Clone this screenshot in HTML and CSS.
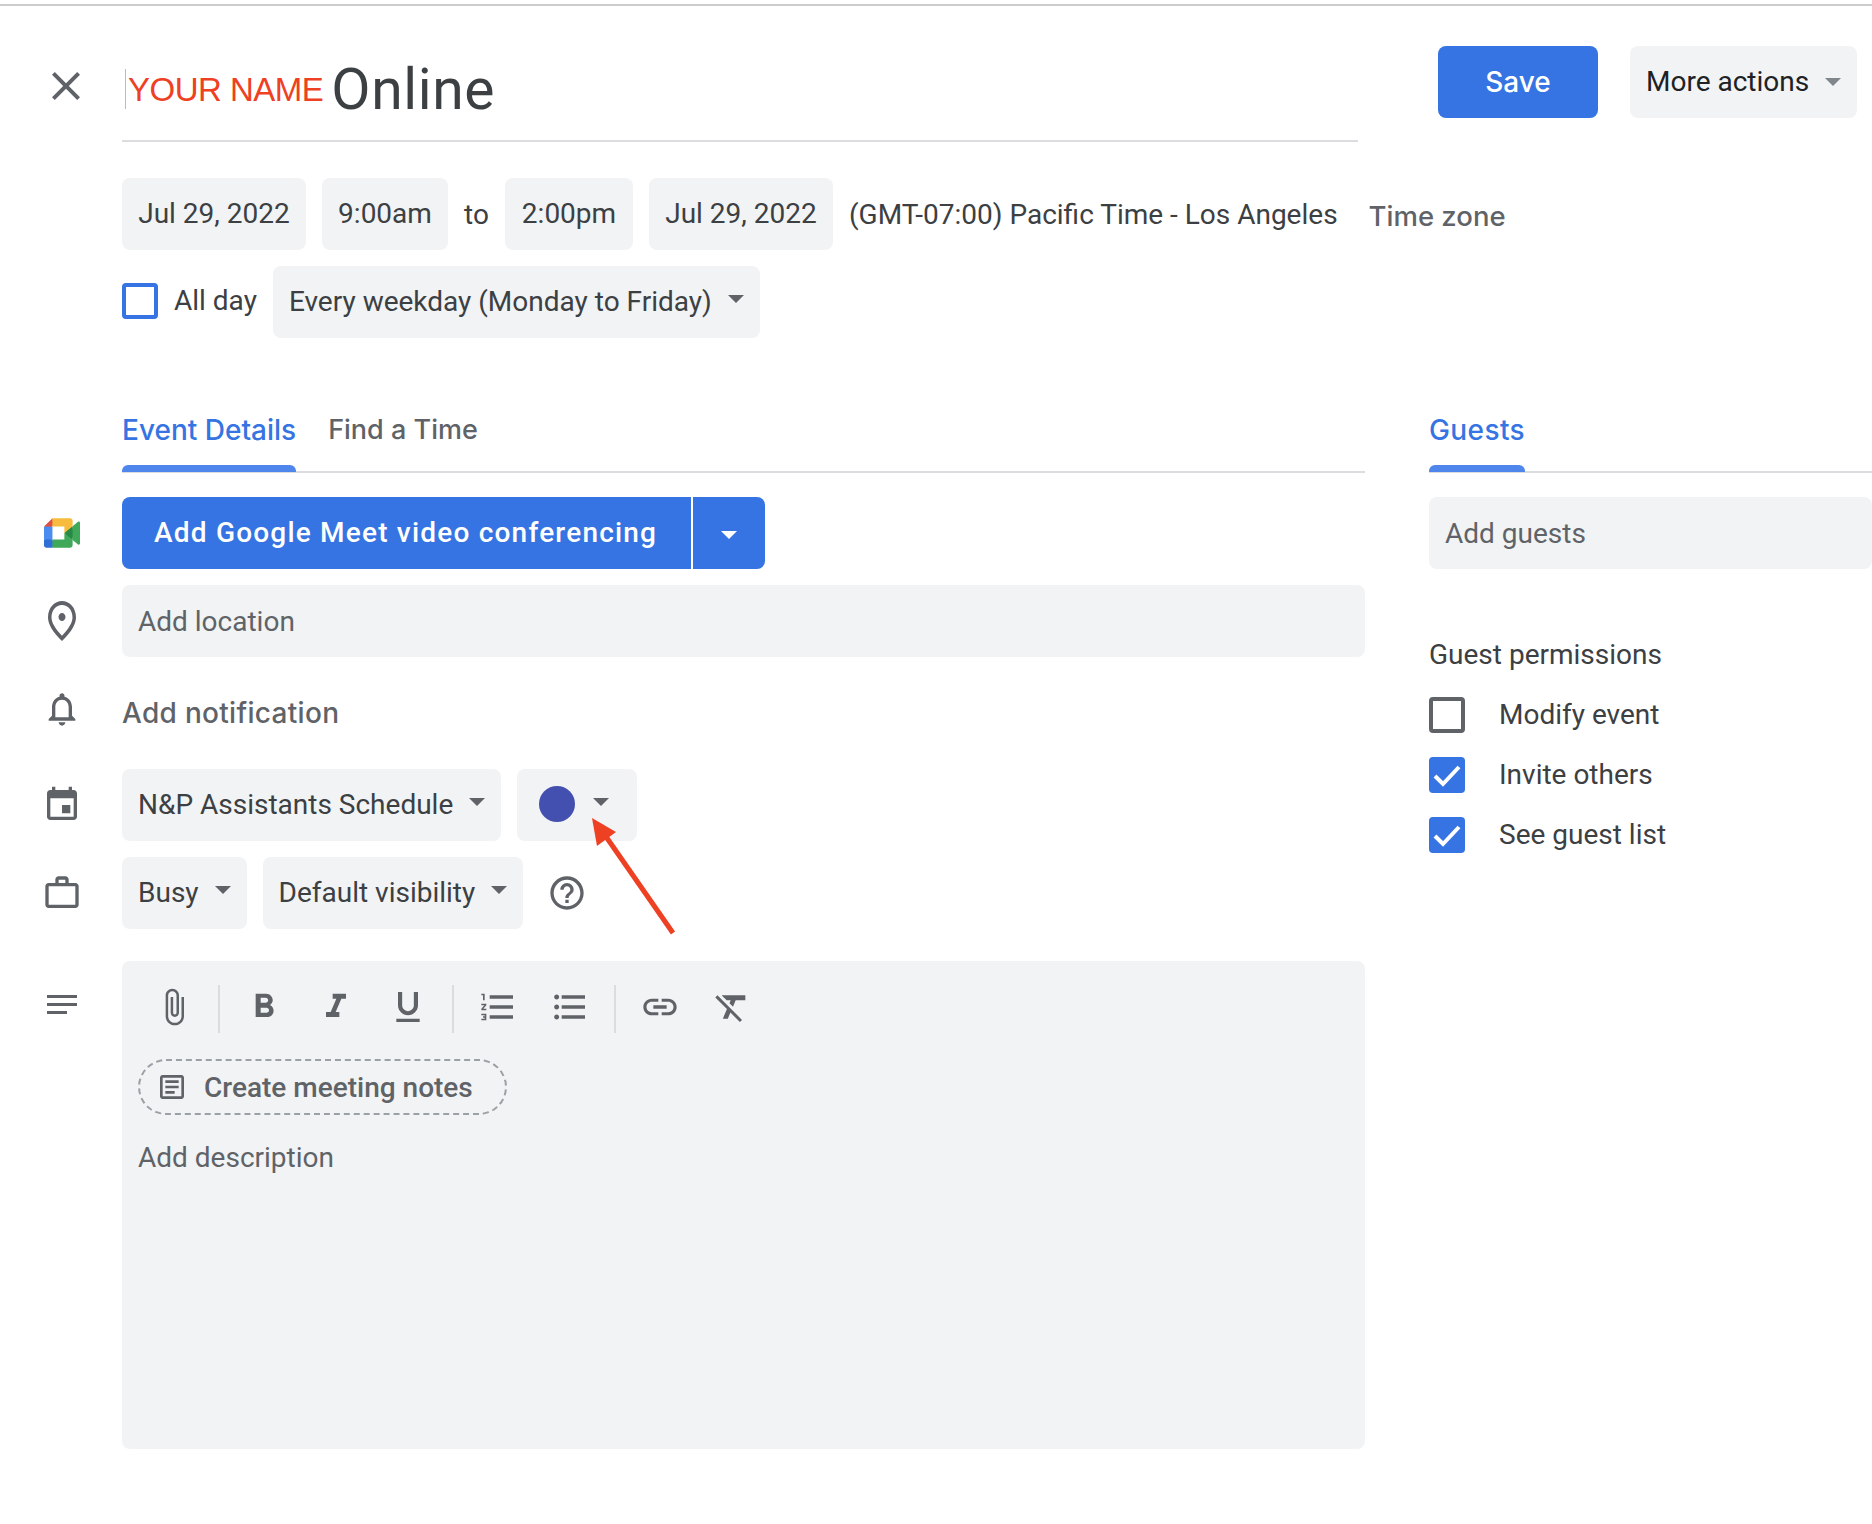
FILE: index.html
```html
<!DOCTYPE html>
<html lang="en">
<head>
  <meta charset="UTF-8" />
  <title>Edit event - Calendar</title>
  <link rel="stylesheet" href="styles.css">
</head>
<body>
  <div class="page">
    <div class="top-line"></div>

    <header class="head">
      <div class="icon-col">
        <svg class="ic ic-close" viewBox="0 0 24 24"><path d="M19 6.41L17.59 5 12 10.59 6.41 5 5 6.41 10.59 12 5 17.59 6.41 19 12 13.41 17.59 19 19 17.59 13.41 12z"/></svg>
      </div>
      <div class="title">
        <span class="cursor"></span>
        <span class="title-name">YOUR NAME</span>
        <span class="title-text">Online</span>
      </div>
      <button class="btn-save">Save</button>
      <div class="box box-more">More actions <span class="caret caret-light"></span></div>
    </header>

    <div class="date-row">
      <div class="box box-date">Jul 29, 2022</div>
      <div class="box box-start">9:00am</div>
      <span class="to">to</span>
      <div class="box box-end">2:00pm</div>
      <div class="box box-date">Jul 29, 2022</div>
      <span class="tz">(GMT-07:00) Pacific Time - Los Angeles</span>
      <span class="tz-link">Time zone</span>
    </div>

    <div class="repeat-row">
      <span class="check check-blue"></span>
      <span class="allday">All day</span>
      <div class="box">Every weekday (Monday to Friday) <span class="caret"></span></div>
    </div>

    <div class="columns">
      <section class="left">
        <nav class="tabs">
          <a class="tab tab-on">Event Details</a>
          <a class="tab tab-find">Find a Time</a>
        </nav>

        <div class="row row-first">
          <div class="icon-col">
            <svg class="meet" viewBox="0 0 87.5 72">
              <path fill="#2a8a45" d="M49.5 36l8.53 9.75 11.47 7.33 2-17.02-2-16.64-11.69 6.44z"/>
              <path fill="#2f6fd6" d="M0 51.5V66c0 3.315 2.685 6 6 6h14.5l3-10.96-3-9.54-9.95-3z"/>
              <path fill="#dd5144" d="M20.5 0L0 20.5l10.55 3 9.95-3 2.95-9.41z"/>
              <path fill="#4a8cf0" d="M20.5 20.5H0v31h20.5z"/>
              <path fill="#3fa959" d="M82.6 8.68L69.5 19.42v33.66l13.16 10.79c1.97 1.54 4.85.135 4.85-2.37V11c0-2.535-2.945-3.925-4.91-2.32zM49.5 36v15.5h-29V72h43c3.315 0 6-2.685 6-6V53.08z"/>
              <path fill="#f7bc3d" d="M63.5 0h-43v20.5h29V36l20-16.57V6c0-3.315-2.685-6-6-6z"/>
            </svg>
          </div>
          <div class="btn-meet">
            <span class="meet-label">Add Google Meet video conferencing</span>
            <span class="meet-more"><span class="caret caret-white"></span></span>
          </div>
        </div>

        <div class="row">
          <div class="icon-col">
            <svg class="ic ic-pin" viewBox="0 0 24 24" preserveAspectRatio="none"><path d="M12 12c-1.1 0-2-.9-2-2s.9-2 2-2 2 .9 2 2-.9 2-2 2zm6-1.8C18 6.57 15.35 4 12 4s-6 2.57-6 6.2c0 2.34 1.95 5.44 6 9.14 4.05-3.7 6-6.8 6-9.14zM12 2c4.2 0 8 3.22 8 8.2 0 3.32-2.67 7.25-8 11.8-5.33-4.55-8-8.48-8-11.8C4 5.22 7.8 2 12 2z"/></svg>
          </div>
          <div class="box box-wide placeholder">Add location</div>
        </div>

        <div class="row row-notify">
          <div class="icon-col">
            <svg class="ic ic-40 ic-bell" viewBox="0 0 24 24"><path d="M12 22c1.1 0 2-.9 2-2h-4c0 1.1.9 2 2 2zm6-6v-5c0-3.07-1.63-5.64-4.5-6.32V4c0-.83-.67-1.5-1.5-1.5s-1.5.67-1.5 1.5v.68C7.64 5.36 6 7.92 6 11v5l-2 2v1h16v-1l-2-2zm-2 1H8v-6c0-2.48 1.51-4.5 4-4.5s4 2.02 4 4.5v6z"/></svg>
          </div>
          <span class="notify">Add notification</span>
        </div>

        <div class="row">
          <div class="icon-col">
            <svg class="ic ic-40" viewBox="0 0 24 24"><path d="M17 12h-5v5h5v-5zM16 1v2H8V1H6v2H5c-1.11 0-1.99.9-1.99 2L3 19c0 1.1.89 2 2 2h14c1.1 0 2-.9 2-2V5c0-1.1-.9-2-2-2h-1V1h-2zm3 18H5V8h14v11z"/></svg>
          </div>
          <div class="box">N&amp;P Assistants Schedule <span class="caret"></span></div>
          <div class="box box-color"><span class="dot"></span><span class="caret"></span></div>
        </div>

        <div class="row">
          <div class="icon-col">
            <svg class="ic ic-40" viewBox="0 0 24 24"><path d="M14 6V4h-4v2h4zM4 8v11h16V8H4zm16-2c1.11 0 2 .89 2 2v11c0 1.11-.89 2-2 2H4c-1.11 0-2-.89-2-2l.01-11c0-1.11.88-2 1.99-2h4V4c0-1.11.89-2 2-2h4c1.11 0 2 .89 2 2v2h4z"/></svg>
          </div>
          <div class="box">Busy <span class="caret"></span></div>
          <div class="box">Default visibility <span class="caret"></span></div>
          <svg class="ic ic-40 ic-help" viewBox="0 0 24 24"><path d="M11 18h2v-2h-2v2zm1-16C6.48 2 2 6.48 2 12s4.48 10 10 10 10-4.48 10-10S17.52 2 12 2zm0 18c-4.41 0-8-3.59-8-8s3.59-8 8-8 8 3.59 8 8-3.59 8-8 8zm0-14c-2.21 0-4 1.79-4 4h2c0-1.1.9-2 2-2s2 .9 2 2c0 2-3 1.75-3 5h2c0-2.25 3-2.5 3-5 0-2.21-1.79-4-4-4z"/></svg>
        </div>

        <div class="row row-editor">
          <div class="icon-col icon-col-top">
            <svg class="ic ic-lines" viewBox="0 0 30 20"><rect y="0" width="30" height="3"/><rect y="8" width="30" height="3"/><rect y="16" width="20" height="3"/></svg>
          </div>
          <div class="editor">
            <div class="toolbar">
              <span class="tool"><svg class="ic ic-40" viewBox="0 0 24 24"><path d="M16.5 6v11.5c0 2.21-1.79 4-4 4s-4-1.79-4-4V5c0-1.38 1.12-2.5 2.5-2.5s2.5 1.12 2.5 2.5v10.5c0 .55-.45 1-1 1s-1-.45-1-1V6H10v9.5c0 1.38 1.12 2.5 2.5 2.5s2.5-1.12 2.5-2.5V5c0-2.21-1.79-4-4-4S7 2.79 7 5v12.5c0 3.04 2.46 5.5 5.5 5.5s5.5-2.46 5.5-5.5V6h-1.5z"/></svg></span>
              <span class="sep"></span>
              <span class="tool"><svg class="ic ic-40" viewBox="0 0 24 24"><path d="M15.6 10.79c.97-.67 1.65-1.77 1.65-2.79 0-2.26-1.75-4-4-4H7v14h7.04c2.09 0 3.71-1.7 3.71-3.79 0-1.52-.86-2.82-2.15-3.42zM10 6.5h3c.83 0 1.5.67 1.5 1.5s-.67 1.5-1.5 1.5h-3v-3zm3.5 9H10v-3h3.5c.83 0 1.5.67 1.5 1.5s-.67 1.5-1.5 1.5z"/></svg></span>
              <span class="tool"><svg class="ic ic-40" viewBox="0 0 24 24"><path d="M10 4v3h2.21l-3.42 8H6v3h8v-3h-2.21l3.42-8H18V4z"/></svg></span>
              <span class="tool"><svg class="ic ic-40" viewBox="0 0 24 24"><path d="M12 17c3.31 0 6-2.69 6-6V3h-2.5v8c0 1.93-1.57 3.5-3.5 3.5S8.5 12.93 8.5 11V3H6v8c0 3.31 2.69 6 6 6zm-7 2v2h14v-2H5z"/></svg></span>
              <span class="sep"></span>
              <span class="tool"><svg class="ic ic-40" viewBox="0 0 24 24"><path d="M2 17h2v.5H3v1h1v.5H2v1h3v-4H2v1zm1-9h1V4H2v1h1v3zm-1 3h1.8L2 13.1v.9h3v-1H3.2L5 10.9V10H2v1zm5-6v2h14V5H7zm0 14h14v-2H7v2zm0-6h14v-2H7v2z"/></svg></span>
              <span class="tool"><svg class="ic ic-40" viewBox="0 0 24 24"><path d="M4 10.5c-.83 0-1.5.67-1.5 1.5s.67 1.5 1.5 1.5 1.5-.67 1.5-1.5-.67-1.5-1.5-1.5zm0-6c-.83 0-1.5.67-1.5 1.5S3.17 7.5 4 7.5 5.5 6.83 5.5 6 4.83 4.5 4 4.5zm0 12c-.83 0-1.5.68-1.5 1.5s.68 1.5 1.5 1.5 1.5-.68 1.5-1.5-.67-1.5-1.5-1.5zM7 19h14v-2H7v2zm0-6h14v-2H7v2zm0-8v2h14V5H7z"/></svg></span>
              <span class="sep"></span>
              <span class="tool"><svg class="ic ic-40" viewBox="0 0 24 24"><path d="M3.9 12c0-1.71 1.39-3.1 3.1-3.1h4V7H7c-2.76 0-5 2.24-5 5s2.24 5 5 5h4v-1.9H7c-1.71 0-3.1-1.39-3.1-3.1zM8 13h8v-2H8v2zm9-6h-4v1.9h4c1.71 0 3.1 1.39 3.1 3.1s-1.39 3.1-3.1 3.1h-4V17h4c2.76 0 5-2.24 5-5s-2.24-5-5-5z"/></svg></span>
              <span class="tool"><svg class="ic ic-40" viewBox="0 0 24 24"><path d="M3.27 5L2 6.27l6.97 6.97L6.5 19h3l1.57-3.66L16.73 21 18 19.73 3.55 5.27 3.27 5zM6 5v.18L8.82 8h2.4l-.72 1.68 2.1 2.1L14.21 8H20V5H6z"/></svg></span>
            </div>
            <div class="chip">
              <svg class="ic ic-32" viewBox="0 0 24 24"><path d="M19 3H5c-1.1 0-2 .9-2 2v14c0 1.1.9 2 2 2h14c1.1 0 2-.9 2-2V5c0-1.1-.9-2-2-2zm0 16H5V5h14v14zM7 7h10v2H7zm0 4h10v2H7zm0 4h7v2H7z"/></svg>
              <span>Create meeting notes</span>
            </div>
            <div class="desc">Add description</div>
          </div>
        </div>
      </section>

      <aside class="right">
        <nav class="tabs tabs-right">
          <a class="tab tab-on tab-guests">Guests</a>
        </nav>
        <div class="box box-guests placeholder">Add guests</div>
        <div class="perm-title">Guest permissions</div>
        <div class="perm"><span class="check check-grey"></span>Modify event</div>
        <div class="perm"><span class="check check-on"><svg viewBox="0 0 36 36"><polyline points="6,19 14,27 30,10"/></svg></span>Invite others</div>
        <div class="perm"><span class="check check-on"><svg viewBox="0 0 36 36"><polyline points="6,19 14,27 30,10"/></svg></span>See guest list</div>
      </aside>
    </div>

    <!-- annotation drawn on top of the screenshot -->
    <svg class="red-arrow" viewBox="0 0 100 130">
      <line x1="88" y1="123" x2="15" y2="18"/>
      <polygon points="7,8 31,22 12,36"/>
    </svg>
  </div>
</body>
</html>
```

FILE: styles.css
```css
* {
  box-sizing: border-box;
  font-family: 'Roboto', sans-serif;
}

html, body {
  margin: 0;
  padding: 0;
  background: #fff;
}

.page {
  position: relative;
  width: 1872px;
  height: 1524px;
  overflow: hidden;
  font-size: 28px;
  color: #3c4043;
}

.top-line {
  height: 2px;
  margin-top: 4px;
  background: #ccc;
}

.ic {
  display: block;
  width: 48px;
  height: 48px;
  fill: #5f6368;
  flex: none;
}

.ic-40 {
  width: 40px;
  height: 40px;
}

.ic-32 {
  width: 32px;
  height: 32px;
}

.ic-lines {
  width: 30px;
  height: 20px;
}

.ic-pin {
  width: 42px;
}

.ic-bell {
  margin-bottom: 8px;
}

.ic-help {
  margin-left: 8px;
}

.icon-col {
  width: 122px;
  display: flex;
  justify-content: center;
  flex: none;
  padding-left: 2px;
}

/* header */
.head {
  display: flex;
  align-items: flex-start;
  padding-top: 40px;
}

.head .icon-col {
  justify-content: flex-start;
  padding-left: 42px;
  padding-top: 16px;
}

.title {
  width: 1236px;
  height: 96px;
  border-bottom: 2px solid #dadce0;
  display: flex;
  align-items: flex-start;
  padding-left: 3px;
}

.cursor {
  width: 1px;
  height: 40px;
  background: #bbb;
  margin: 23px 2px 0 0;
}

.title-name {
  font-family: 'Liberation Sans', sans-serif;
  font-size: 33px;
  line-height: 40px;
  letter-spacing: -0.5px;
  color: #ee4023;
  margin: 24px 8px 0 0;
}

.title-text {
  font-size: 57px;
  line-height: 64px;
  letter-spacing: 0.6px;
  margin-top: 12px;
  color: #3c4043;
}

.btn-save {
  width: 160px;
  height: 72px;
  margin-left: 80px;
  padding: 0 0 1px;
  background: #3574e2;
  color: #fff;
  border: none;
  border-radius: 8px;
  font-family: 'Inter', sans-serif;
  font-size: 28px;
  font-weight: 500;
}

.box {
  height: 72px;
  background: #f1f3f4;
  border-radius: 8px;
  padding: 0 16px 2px;
  display: flex;
  align-items: center;
  white-space: pre;
  flex: none;
}

.box-date {
  width: 184px;
  justify-content: center;
}

.box-start {
  width: 126px;
  justify-content: center;
}

.box-end {
  width: 128px;
  justify-content: center;
}

.box-more {
  width: 227px;
  margin-left: 32px;
  color: #202124;
}

.caret {
  display: inline-block;
  width: 0;
  height: 0;
  margin-left: 9px;
  border-left: 8px solid transparent;
  border-right: 8px solid transparent;
  border-top: 8px solid #5f6368;
  position: relative;
  top: -2px;
}

.caret-light {
  border-top-color: #80868b;
  top: 1px;
}

.caret-white {
  border-top-color: #fff;
  margin-left: 0;
  top: 2px;
}

/* date and repeat */
.date-row {
  display: flex;
  align-items: center;
  gap: 16px;
  margin: 36px 0 0 122px;
}

.to {
  width: 25px;
}

.tz {
  white-space: nowrap;
}

.tz-link {
  margin-left: 15px;
  font-family: 'Inter', sans-serif;
  font-size: 27.5px;
  font-weight: 500;
  color: #5f6368;
  position: relative;
  top: 2px;
}

.repeat-row {
  display: flex;
  align-items: center;
  margin: 16px 0 0 122px;
}

.check {
  display: block;
  width: 36px;
  height: 36px;
  border-radius: 4px;
  flex: none;
}

.check-blue {
  border: 4px solid #3574e2;
  margin-bottom: 2px;
}

.check-grey {
  border: 4px solid #5f6368;
}

.check-on {
  background: #3574e2;
}

.check-on svg {
  display: block;
  width: 36px;
  height: 36px;
  fill: none;
  stroke: #fff;
  stroke-width: 4;
}

.allday {
  margin: 0 16px;
  padding-bottom: 4px;
}

/* two columns */
.columns {
  display: flex;
  margin-top: 60px;
}

.left {
  width: 1365px;
  flex: none;
}

.right {
  width: 443px;
  margin-left: 64px;
  flex: none;
}

.tabs {
  height: 75px;
  margin-left: 122px;
  border-bottom: 2px solid #dadce0;
  display: flex;
  gap: 32px;
}

.tabs-right {
  margin-left: 0;
}

.tab {
  display: flex;
  flex-direction: column;
  height: 74px;
  padding-top: 15px;
  font-family: 'Inter', sans-serif;
  font-size: 28px;
  font-weight: 500;
  color: #5f6368;
}

.tab-find {
  font-size: 27px;
}

.tab-guests {
  letter-spacing: 0.4px;
}

.tab-on {
  color: #3574e2;
}

.tab-on::after {
  content: "";
  margin-top: auto;
  height: 7px;
  background: #4f86ec;
  border-radius: 6px 6px 0 0;
}

.row {
  display: flex;
  align-items: center;
  gap: 16px;
  margin-top: 16px;
}

.row .icon-col {
  margin-right: -16px;
}

.row-first {
  margin-top: 24px;
}

.row-notify {
  height: 80px;
}

.notify {
  font-family: 'Inter', sans-serif;
  font-size: 28px;
  font-weight: 500;
  letter-spacing: 0.3px;
  color: #5f6368;
}

.btn-meet {
  display: flex;
  height: 72px;
  background: #3574e2;
  border-radius: 8px;
  color: #fff;
  font-family: 'Inter', sans-serif;
  font-size: 28px;
  font-weight: 500;
  letter-spacing: 1.2px;
  overflow: hidden;
}

.meet {
  width: 36px;
  height: 30px;
  display: block;
}

.meet-label {
  width: 571px;
  display: flex;
  align-items: center;
  padding: 0 0 1px 32px;
  border-right: 2px solid #fff;
}

.meet-more {
  width: 72px;
  display: flex;
  align-items: center;
  justify-content: center;
}

.box-wide {
  width: 1243px;
}

.placeholder {
  color: #5f6368;
  padding-bottom: 0;
}

.box-color {
  width: 120px;
  padding-left: 22px;
}

.dot {
  width: 36px;
  height: 36px;
  border-radius: 50%;
  background: #4350af;
  flex: none;
}

.box-color .caret {
  margin-left: 18px;
}

/* description editor */
.row-editor {
  margin-top: 32px;
  align-items: flex-start;
}

.icon-col-top {
  padding-top: 34px;
}

.editor {
  width: 1243px;
  height: 488px;
  background: #f1f3f4;
  border-radius: 8px;
  padding: 12px 0 0 16px;
  color: #5f6368;
}

.toolbar {
  display: flex;
  align-items: center;
  height: 72px;
}

.tool {
  width: 72px;
  height: 72px;
  display: flex;
  align-items: center;
  justify-content: center;
  padding-bottom: 4px;
}

.sep {
  width: 2px;
  height: 48px;
  margin: 0 8px;
  background: #dadce0;
}

.chip {
  width: 369px;
  height: 56px;
  margin-top: 14px;
  padding-left: 16px;
  display: flex;
  align-items: center;
  gap: 16px;
  border: 2px dashed #9aa0a6;
  border-radius: 28px;
  font-weight: 500;
}

.desc {
  margin-top: 23px;
  line-height: 40px;
}

/* guests */
.box-guests {
  margin-top: 24px;
  width: 443px;
}

.perm-title {
  margin-top: 70px;
  line-height: 32px;
}

.perm {
  display: flex;
  align-items: center;
  gap: 34px;
  height: 36px;
  margin-top: 24px;
  padding-bottom: 1px;
}

.perm-title + .perm {
  margin-top: 26px;
}

.red-arrow {
  position: absolute;
  left: 585px;
  top: 810px;
  width: 100px;
  height: 130px;
}

.red-arrow line {
  stroke: #ee4023;
  stroke-width: 5;
}

.red-arrow polygon {
  fill: #ee4023;
}
```
